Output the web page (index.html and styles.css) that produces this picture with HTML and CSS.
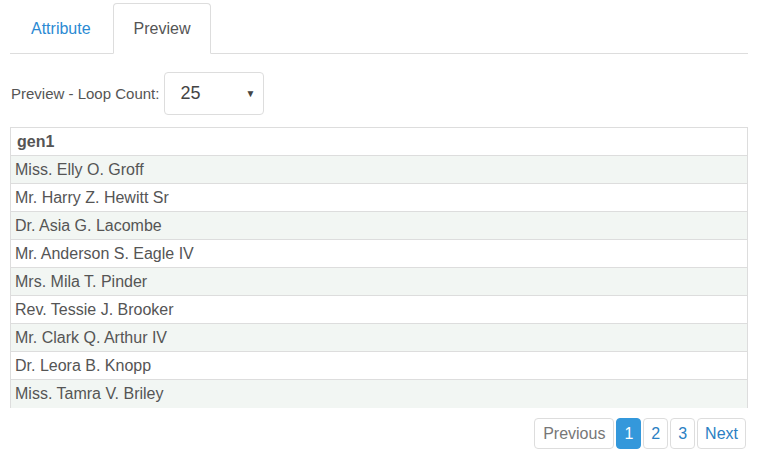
FILE: index.html
```html
<!DOCTYPE html>
<html>
<head>
<meta charset="utf-8">
<link rel="stylesheet" href="styles.css">
</head>
<body>
<div class="page">
  <ul class="tabs">
    <li class="tab"><a class="tab-link">Attribute</a></li>
    <li class="tab active"><a class="tab-link">Preview</a></li>
  </ul>
  <div class="loop-row">
    <span class="loop-label">Preview - Loop Count:</span>
    <div class="select"><span class="select-value">25</span><span class="select-arrow">▼</span></div>
  </div>
  <div class="table-wrap">
    <table class="grid">
      <thead><tr><th>gen1</th></tr></thead>
      <tbody>
        <tr><td>Miss. Elly O. Groff</td></tr>
        <tr><td>Mr. Harry Z. Hewitt Sr</td></tr>
        <tr><td>Dr. Asia G. Lacombe</td></tr>
        <tr><td>Mr. Anderson S. Eagle IV</td></tr>
        <tr><td>Mrs. Mila T. Pinder</td></tr>
        <tr><td>Rev. Tessie J. Brooker</td></tr>
        <tr><td>Mr. Clark Q. Arthur IV</td></tr>
        <tr><td>Dr. Leora B. Knopp</td></tr>
        <tr><td>Miss. Tamra V. Briley</td></tr>
      </tbody>
    </table>
  </div>
  <div class="pager">
    <span class="page-btn disabled">Previous</span>
    <span class="page-btn current">1</span>
    <span class="page-btn">2</span>
    <span class="page-btn">3</span>
    <span class="page-btn">Next</span>
  </div>
</div>
</body>
</html>
```

FILE: styles.css
```css
* { box-sizing: border-box; }
body {
  margin: 0;
  background: #fff;
  font-family: "Liberation Sans", Arial, sans-serif;
  color: #555;
}
.page {
  width: 738px;
  margin: 3px 0 0 10px;
}
.tabs {
  list-style: none;
  margin: 0;
  padding: 0;
  display: flex;
  gap: 2px;
  border-bottom: 1px solid #ddd;
  height: 51px;
}
.tab {
  height: 51px;
  margin-bottom: -1px;
}
.tab-link {
  display: block;
  padding: 15px 19px 0 20px;
  height: 51px;
  font-size: 16px;
  line-height: 20px;
  color: #2b8ad3;
  border: 1px solid transparent;
  border-radius: 4px 4px 0 0;
}
.tab.active .tab-link {
  color: #555;
  background: #fff;
  border-color: #ddd #ddd transparent;
}
.loop-row {
  display: flex;
  align-items: center;
  gap: 5px;
  margin-top: 18px;
}
.loop-label {
  font-size: 15px;
  color: #555;
  padding-left: 1px;
}
.select {
  width: 100px;
  height: 43px;
  border: 1px solid #ddd;
  border-radius: 4px;
  display: flex;
  align-items: center;
  justify-content: space-between;
  padding: 0 8px 0 15px;
}
.select-value {
  font-size: 18px;
  color: #444;
}
.select-arrow {
  font-size: 10px;
  color: #444;
}
.table-wrap {
  margin-top: 12px;
  height: 281px;
  overflow: hidden;
}
.grid {
  width: 100%;
  border-collapse: collapse;
  border: 1px solid #ddd;
  border-bottom: none;
  font-size: 16px;
}
.grid th, .grid td {
  height: 28px;
  padding: 0 4px;
  text-align: left;
  border-bottom: 1px solid #ddd;
  line-height: 20px;
}
.grid th {
  font-weight: bold;
  padding-left: 6px;
  color: #555;
}
.grid tbody tr:nth-child(odd) td {
  background: #f2f6f3;
}
.grid tbody tr:last-child td {
  border-bottom: none;
  height: 29px;
}
.pager {
  display: flex;
  justify-content: flex-end;
  gap: 2px;
  margin-top: 10px;
  padding-right: 2px;
}
.page-btn {
  display: block;
  height: 31px;
  padding: 5px 7px;
  font-size: 16px;
  line-height: 20px;
  color: #2b7fc3;
  border: 1px solid #ddd;
  border-radius: 4px;
  background: #fff;
}
.page-btn.disabled {
  color: #777;
  padding: 5px 8px;
}
.page-btn.current {
  background: #3498db;
  border-color: #3498db;
  color: #fff;
}
```
